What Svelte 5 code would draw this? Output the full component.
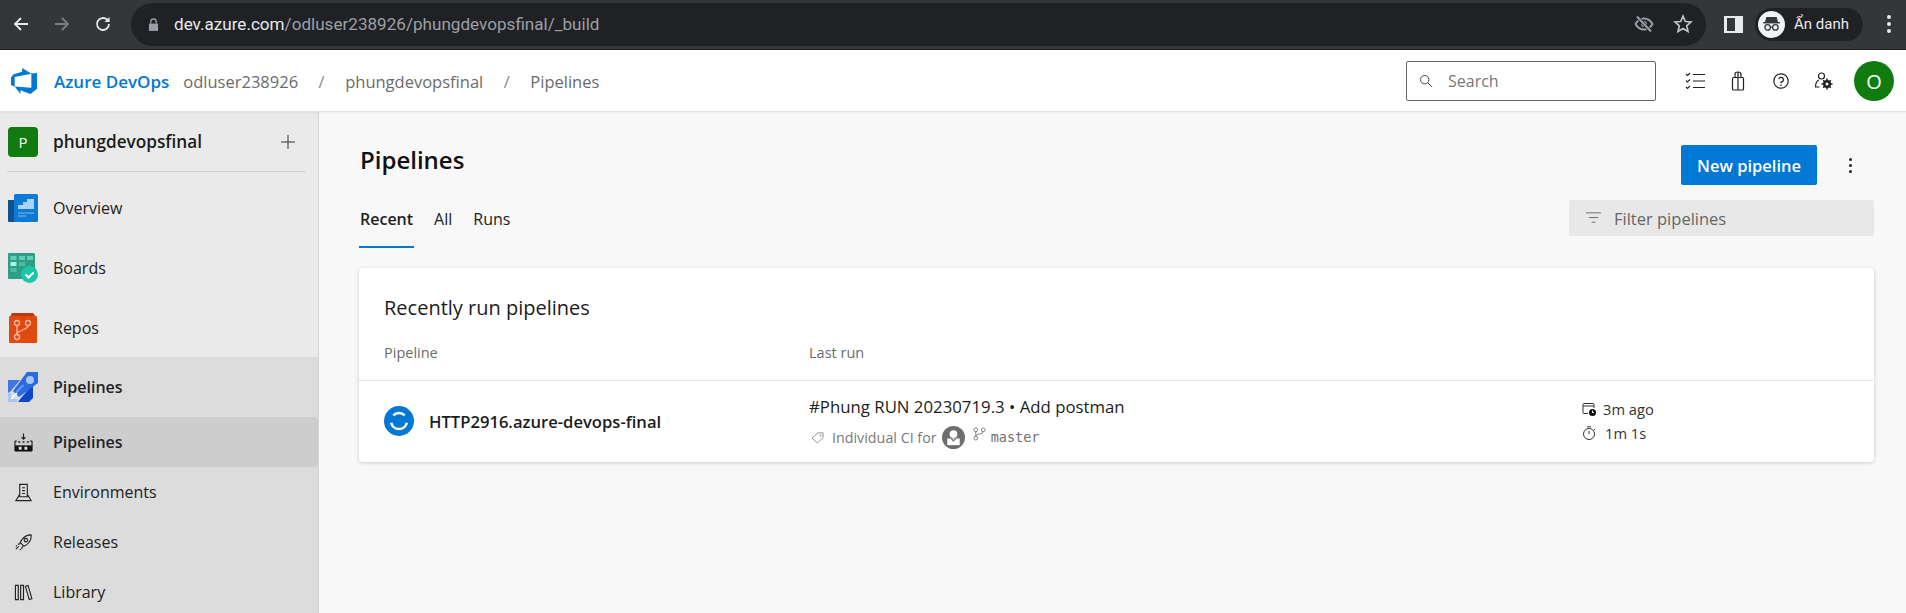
<script>
  const subNav = [
    { key: 'pipelines', label: 'Pipelines', selected: true },
    { key: 'environments', label: 'Environments' },
    { key: 'releases', label: 'Releases' },
    { key: 'library', label: 'Library' }
  ];
  const tabs = ['Recent', 'All', 'Runs'];
</script>

{#snippet subIcon(key)}
  <svg class="sub-icon" viewBox="0 0 20 20" fill="none" stroke="#222" stroke-width="1.2">
    {#if key === 'pipelines'}
      <path d="M10 0.5v6M8 4.500l2 2 2-2" />
      <path d="M1 8.500V19M19 8.500V19M1 8.500h2M17 8.500h2" />
      <path d="M4.500 9.500h2M9 9.500h2M13.500 9.500h2" stroke-width="1.600" />
      <path d="M1 13h18v6.500H1z" fill="#111" stroke="none" />
      <path d="M5 14.500h3v3H5zM11 14.500h3v3h-3z" fill="#ddd" stroke="none" />
    {:else if key === 'environments'}
      <path d="M6 1.500h8v13H6zM8.500 5h3M8.500 8h3M8.500 11h3" />
      <path d="M6 12L2 18.500h16L14 12" />
    {:else if key === 'releases'}
      <path d="M18 2c.4 4-1.500 8-5 10.500l-2.500 1.500-4-4 1.500-2.500C10.500 4 14 2 18 2z" />
      <circle cx="12.500" cy="7.500" r="1.800" />
      <path d="M7 11l-3 1M9 14l-1 3M5 14l-3 3M3 13l-1 1M7 17l-1 1" />
    {:else}
      <path d="M1.500 2.500h3v15h-3zM7 2.500h3v15H7zM12 3.500l2.800-1 4 14-2.800 1z" />
    {/if}
  </svg>
{/snippet}

<div class="page">
  <div class="chrome">
    <svg class="nav-btn first" viewBox="0 0 18 18" fill="none" stroke="#e8eaed" stroke-width="1.800"><path d="M16 9H3M9 3L3 9l6 6" /></svg>
    <svg class="nav-btn" viewBox="0 0 18 18" fill="none" stroke="#7d7e81" stroke-width="1.800"><path d="M2 9h13M9 3l6 6-6 6" /></svg>
    <svg class="nav-btn" viewBox="0 0 18 18" fill="none" stroke="#e8eaed" stroke-width="1.800"><path d="M15 9a6 6 0 1 1-1.800-4.300L15 6.500" /><path d="M15.500 2v5h-5" fill="#e8eaed" stroke="none" /></svg>
    <div class="omnibox">
      <svg class="lock" viewBox="0 0 12 14" fill="#9aa0a6"><path d="M1 6h10v8H1z" /><path d="M3 6V4a3 3 0 0 1 6 0v2" fill="none" stroke="#9aa0a6" stroke-width="1.400" /></svg>
      <span class="url"><span class="host">dev.azure.com</span>/odluser238926/phungdevopsfinal/_build</span>
      <span class="spacer"></span>
      <svg class="eye" viewBox="0 0 20 20" fill="none" stroke="#9aa0a6" stroke-width="2"><path d="M1.500 10C4 5.500 7 4.500 10 4.500s6 1 8.500 5.500C16 14.500 13 15.500 10 15.500S4 14.500 1.500 10z" /><circle cx="10" cy="10" r="2" fill="#9aa0a6" /><path d="M3 2.500l14 15" stroke="#202124" stroke-width="3.500" /><path d="M3 2.500l14 15" /></svg>
      <svg class="star" viewBox="0 0 20 20" fill="none" stroke="#bdc1c6" stroke-width="1.700"><path d="M10 2.200l2.300 5.300 5.700.5-4.300 3.800 1.300 5.600-5-3-5 3 1.300-5.600L2 8l5.700-.5z" /></svg>
    </div>
    <div class="panel-icon"><span></span></div>
    <div class="incognito">
      <span class="inc-avatar">
        <svg viewBox="0 0 20 20" fill="none" stroke="#35363a" stroke-width="1.200"><path d="M5.500 3.500h9l1 4h-11z" fill="#35363a" /><path d="M2 8.300h16" stroke-width="1.400" /><circle cx="6.300" cy="12.800" r="2.600" /><circle cx="13.700" cy="12.800" r="2.600" /><path d="M8.900 12.500h2.200" /></svg>
      </span>
      <span class="inc-label">Ẩn danh</span>
    </div>
    <div class="chrome-dots"><i></i><i></i><i></i></div>
  </div>

  <header class="topbar">
    <svg class="logo" viewBox="1 1 16 16" fill="#0078d4"><path d="M17 4v9.740l-4 3.280-6.200-2.260V17l-3.510-4.590 10.230.8V4.440zm-3.410.49L7.850 1v2.290L2.580 4.840 1 6.870v4.610l2.260 1V6.570z" /></svg>
    <span class="brand">Azure DevOps</span>
    <span class="crumb org">odluser238926</span>
    <span class="sep">/</span>
    <span class="crumb">phungdevopsfinal</span>
    <span class="sep">/</span>
    <span class="crumb">Pipelines</span>
    <span class="spacer"></span>
    <div class="search">
      <svg class="search-icon" viewBox="0 0 16 16" fill="none" stroke="#444" stroke-width="1.100"><circle cx="6.500" cy="6.500" r="4.800" /><path d="M10 10l5 5" /></svg>
      <span>Search</span>
    </div>
    <svg class="top-icon" viewBox="0 0 20 20" fill="none" stroke="#222" stroke-width="1.100"><path d="M8 3.500h12M8 10h12M8 16.500h12" /><path d="M1 3l1.500 1.500L5 2M1 9.500L2.500 11 5 8.500M1 16l1.500 1.500L5 15" /></svg>
    <svg class="top-icon" viewBox="0 0 20 20" fill="none" stroke="#222" stroke-width="1.200"><path d="M5.500 6.500h9a1 1 0 0 1 1 1V18a1 1 0 0 1-1 1h-9a1 1 0 0 1-1-1V7.500a1 1 0 0 1 1-1z" /><path d="M7 6.500V3a3 2 0 0 1 6 0v3.500M10 1.500V19" /></svg>
    <svg class="top-icon" viewBox="0 0 20 20" fill="none" stroke="#222" stroke-width="1.200"><circle cx="10" cy="10" r="7.200" /><path d="M7.800 8.200A2.300 2.300 0 1 1 10 11v1.200M10 13.600v1.400" /></svg>
    <svg class="top-icon gear" viewBox="0 0 20 20" fill="none" stroke="#222" stroke-width="1.200"><circle cx="7.500" cy="5" r="3" /><path d="M5 9C2.500 10 1.500 12 1.500 16h4" /><circle cx="13" cy="13" r="4" fill="#222" stroke="none" /><path d="M13 7.500v11M7.500 13h11M9.200 9.200l7.600 7.600M16.800 9.200l-7.600 7.600" stroke-width="1.500" /><circle cx="13" cy="13" r="1.500" fill="#fff" stroke="none" /></svg>
    <div class="avatar">O</div>
  </header>

  <div class="body">
    <aside class="sidebar">
      <div class="project">
        <span class="project-badge">P</span>
        <span class="project-name">phungdevopsfinal</span>
        <svg class="plus" viewBox="0 0 14 14" stroke="#333" stroke-width="1"><path d="M7 0v14M0 7h14" /></svg>
      </div>
      <div class="divider"></div>

      <div class="hubs">
        <div class="nav-item">
          <svg class="hub-icon" viewBox="0 0 30 28">
            <path d="M0 6h10v22H1a1 1 0 0 1-1-1z" fill="#10518f" />
            <rect x="6" width="24" height="28" rx="1.500" fill="#0f79d6" />
            <path d="M10 11h5V8h4V5h7v10H10z" fill="#a8d5f7" />
            <path d="M10 19h16M10 22h8" stroke="#7fbdf0" stroke-width="1" />
          </svg>
          <span>Overview</span>
        </div>
        <div class="nav-item">
          <svg class="hub-icon" viewBox="0 0 30 30">
            <rect width="27" height="26" rx="1" fill="#2f9e89" />
            <rect x="2.500" y="3" width="6" height="4" fill="#62cdb6" />
            <rect x="11" y="3" width="6" height="4" fill="#62cdb6" />
            <rect x="19" y="3" width="6" height="4" fill="#62cdb6" />
            <rect x="2.500" y="9" width="6" height="4" fill="#a6f4e2" />
            <rect x="11" y="9" width="6" height="4" fill="#4fbba3" />
            <rect x="2.500" y="15" width="6" height="4" fill="#4fbba3" />
            <circle cx="21.500" cy="21.500" r="8.500" fill="#1cc7a8" />
            <path d="M17.500 21.500l3 3 5-5" stroke="#fff" stroke-width="2" fill="none" />
          </svg>
          <span>Boards</span>
        </div>
        <div class="nav-item">
          <svg class="hub-icon" viewBox="0 0 30 30">
            <path d="M4 0h21l3 4H2z" fill="#b83b0b" />
            <rect x="1" y="3" width="28" height="27" rx="1" fill="#de4a0f" />
            <g fill="none" stroke="#f7b9a0" stroke-width="1.300">
              <circle cx="9" cy="10" r="2.500" /><circle cx="20" cy="10" r="2.500" /><circle cx="9" cy="24" r="2.500" />
              <path d="M9 12.500v9M20 12.500c0 5-11 4-11 9" />
            </g>
          </svg>
          <span>Repos</span>
        </div>
      </div>

      <div class="pipelines-group">
        <div class="nav-item group-head">
          <svg class="hub-icon" viewBox="0 0 30 30">
            <path d="M0 8h12L3 19l-3 2z" fill="#3f78e0" />
            <path d="M25 12v14l-4 4H10l3-4z" fill="#1147c4" />
            <path d="M19 0h11v11L11 25l-6-6z" fill="#2b6be0" />
            <circle cx="22" cy="8" r="4" fill="#a9c6f7" />
            <path d="M8.500 20l7-7" stroke="#6b9cf0" stroke-width="2" />
            <path d="M1.500 21v7.500H9" fill="none" stroke="#a8c5f8" stroke-width="3" />
            <path d="M3 27l6-6" stroke="#eef3fd" stroke-width="2" />
          </svg>
          <span>Pipelines</span>
        </div>
        {#each subNav as item}
          <div class="sub-item" class:selected={item.selected}>
            {@render subIcon(item.key)}
            <span>{item.label}</span>
          </div>
        {/each}
      </div>
    </aside>

    <main class="content">
      <div class="title-row">
        <h1>Pipelines</h1>
        <span class="spacer"></span>
        <button class="primary">New pipeline</button>
        <div class="more"><i></i><i></i><i></i></div>
      </div>

      <div class="tab-row">
        <div class="tabs">
          {#each tabs as tab, i}
            <span class="tab" class:active={i === 0}>{tab}</span>
          {/each}
        </div>
        <div class="filter">
          <svg viewBox="0 0 16 12" stroke="#666" stroke-width="1"><path d="M0 .5h16M3 5.500h10M6 10.500h4" /></svg>
          <span>Filter pipelines</span>
        </div>
      </div>

      <section class="card">
        <h2>Recently run pipelines</h2>
        <div class="cols">
          <span class="col-pipeline">Pipeline</span>
          <span>Last run</span>
        </div>
        <div class="row">
          <div class="col-pipeline name-cell">
            <svg class="status" viewBox="0 0 30 30">
              <circle cx="15" cy="15" r="15" fill="#0078d4" />
              <path d="M9.300 9.400a8 8 0 0 1 11.400 0M22.800 16.800a8 8 0 0 1-15.600 0" fill="none" stroke="#fff" stroke-width="2.600" />
            </svg>
            <span class="name">HTTP2916.azure-devops-final</span>
          </div>
          <div class="run-cell">
            <div class="run-title">#Phung RUN 20230719.3 • Add postman</div>
            <div class="run-meta">
              <svg class="tag" viewBox="0 0 14 14" fill="none" stroke="#8a8a8a" stroke-width="1"><path d="M1 7.500L7.500 2H13v5l-6 6z" /><circle cx="10.300" cy="4.700" r=".6" /></svg>
              <span class="trigger">Individual CI for</span>
              <svg class="user" viewBox="0 0 24 24">
                <circle cx="12" cy="12" r="12" fill="#6e6e6e" />
                <circle cx="12" cy="8.500" r="4" fill="#fff" />
                <path d="M5.500 13h13v7h-13z" fill="#fff" />
                <path d="M9.500 13l2.500 2.500 2.500-2.500" fill="none" stroke="#6e6e6e" stroke-width="1.200" />
              </svg>
              <svg class="branch" viewBox="0 0 14 14" fill="none" stroke="#777" stroke-width="1"><circle cx="3" cy="2.500" r="2" /><circle cx="11" cy="2.500" r="2" /><circle cx="3" cy="11.500" r="2" /><path d="M3 4.500v5M11 4.500c0 3-8 2-8 5" /></svg>
              <span class="ref">master</span>
            </div>
          </div>
          <div class="time-cell">
            <div class="time-line">
              <svg viewBox="0 0 14 14" fill="none" stroke="#333" stroke-width="1"><path d="M6 11.500H2a1 1 0 0 1-1-1v-8a1 1 0 0 1 1-1h9a1 1 0 0 1 1 1V6M1 4h11" /><circle cx="10.500" cy="10.500" r="3.500" fill="#111" stroke="none" /><path d="M10.500 8.500v2h1.500" stroke="#fff" /></svg>
              <span>3m ago</span>
            </div>
            <div class="time-line">
              <svg viewBox="0 0 14 14" fill="none" stroke="#333" stroke-width="1"><circle cx="7" cy="8" r="5.500" /><path d="M5 .8h4M7 5v3M12 3l1 1" /></svg>
              <span class="dur">1m 1s</span>
            </div>
          </div>
        </div>
      </section>
    </main>
  </div>
</div>

<style>
  :global(body) {
    margin: 0;
    overflow: hidden;
  }

  .page {
    height: 613px;
    display: flex;
    flex-direction: column;
    font-family: "Open Sans", "Noto Sans", sans-serif;
    font-size: 15px;
    color: #222;
    background: #f8f8f8;
    overflow: hidden;
  }

  .spacer {
    flex: 1;
  }

  /* browser chrome */
  .chrome {
    height: 50px;
    flex: none;
    display: flex;
    align-items: center;
    background: #35363a;
    box-sizing: border-box;
    padding-bottom: 1px;
    border-bottom: 1px solid #202124;
  }

  .nav-btn {
    width: 18px;
    height: 18px;
    margin-left: 23px;
  }

  .nav-btn.first {
    margin-left: 12px;
  }

  .omnibox {
    width: 1575px;
    height: 43px;
    margin-left: 19px;
    display: flex;
    align-items: center;
    background: #202124;
    border-radius: 22px;
  }

  .lock {
    width: 11px;
    height: 13px;
    margin-left: 17px;
  }

  .url {
    margin-left: 15px;
    font-family: Roboto, sans-serif;
    font-size: 17.100px;
    color: #9aa0a6;
  }

  .host {
    color: #e8eaed;
  }

  .eye {
    width: 20px;
    height: 20px;
  }

  .star {
    width: 20px;
    height: 20px;
    margin: 0 13px 0 19px;
  }

  .panel-icon {
    width: 19px;
    height: 17px;
    margin-left: 18px;
    box-sizing: border-box;
    border: 2px solid #e8eaed;
    border-left-width: 3px;
    display: flex;
    justify-content: flex-end;
  }

  .panel-icon span {
    width: 6px;
    background: #e8eaed;
  }

  .incognito {
    width: 108px;
    height: 33px;
    margin-left: 12px;
    display: flex;
    align-items: center;
    background: #202124;
    border-radius: 17px;
    box-sizing: border-box;
    padding-left: 3px;
  }

  .inc-avatar {
    width: 27px;
    height: 27px;
    border-radius: 50%;
    background: #f1f3f4;
    display: flex;
    align-items: center;
    justify-content: center;
  }

  .inc-avatar svg {
    width: 21px;
    height: 21px;
  }

  .inc-label {
    margin-left: 9px;
    font-family: Roboto, sans-serif;
    font-size: 15px;
    color: #e8eaed;
  }

  .chrome-dots {
    margin-left: 24px;
    display: flex;
    flex-direction: column;
    gap: 3px;
  }

  .chrome-dots i {
    width: 4px;
    height: 4px;
    border-radius: 50%;
    background: #e8eaed;
  }

  /* azure header */
  .topbar {
    height: 62px;
    flex: none;
    box-sizing: border-box;
    display: flex;
    align-items: center;
    background: #fff;
    border-bottom: 1px solid #e3e3e3;
    box-shadow: 0 1px 2px rgba(0, 0, 0, 0.06);
    position: relative;
    padding: 1px 12px 0 0;
  }

  .logo {
    width: 26px;
    height: 26px;
    margin-left: 11px;
  }

  .brand {
    margin-left: 17px;
    font-weight: 600;
    font-size: 17px;
    color: #0078d4;
  }

  .crumb {
    color: #6b6b6b;
    font-size: 16.500px;
  }

  .crumb.org {
    margin-left: 14px;
  }

  .sep {
    color: #8a8a8a;
    font-size: 16.500px;
    margin: 0 20.500px;
  }

  .search {
    width: 250px;
    height: 40px;
    box-sizing: border-box;
    border: 1px solid #666;
    border-radius: 2px;
    display: flex;
    align-items: center;
    padding-left: 12px;
    margin-right: 29px;
    color: #777;
    font-size: 16px;
  }

  .search-icon {
    width: 14px;
    height: 14px;
    margin-right: 15px;
  }

  .top-icon {
    width: 20px;
    height: 20px;
    margin-right: 23px;
  }

  .top-icon.gear {
    margin-right: 20px;
  }

  .avatar {
    width: 40px;
    height: 40px;
    border-radius: 50%;
    background: #107c10;
    color: #fff;
    font-size: 20px;
    display: flex;
    align-items: center;
    justify-content: center;
  }

  .body {
    flex: 1;
    display: flex;
    min-height: 0;
  }

  /* sidebar */
  .sidebar {
    width: 319px;
    flex: none;
    box-sizing: border-box;
    background: #eaeaea;
    border-right: 1px solid #d4d4d4;
    display: flex;
    flex-direction: column;
  }

  .project {
    height: 59px;
    flex: none;
    display: flex;
    align-items: center;
    padding-left: 8px;
  }

  .project-badge {
    width: 30px;
    height: 30px;
    border-radius: 4px;
    background: #107c10;
    color: #fff;
    font-size: 15px;
    display: flex;
    align-items: center;
    justify-content: center;
  }

  .project-name {
    margin-left: 15px;
    font-weight: 600;
    font-size: 17.200px;
    color: #1c1c1c;
    flex: 1;
  }

  .plus {
    width: 14px;
    height: 14px;
    margin-right: 23px;
  }

  .divider {
    height: 1px;
    flex: none;
    background: #d0d0d0;
    margin: 0 12px 0 7px;
  }

  .hubs {
    padding-top: 6px;
  }

  .nav-item {
    height: 60px;
    flex: none;
    display: flex;
    align-items: center;
    padding-left: 8px;
    font-size: 16px;
  }

  .hub-icon {
    width: 30px;
    height: 30px;
    margin-right: 15px;
  }

  .pipelines-group {
    background: #dcdcdc;
    flex: 1;
    margin-top: -1px;
  }

  .group-head {
    font-weight: 600;
    height: 60px;
  }

  .sub-item {
    height: 50px;
    display: flex;
    align-items: center;
    font-size: 16px;
    padding-left: 14px;
    border-radius: 0 4px 4px 0;
  }

  .sub-item.selected {
    background: #cdcdcd;
    font-weight: 600;
  }

  .sub-icon {
    width: 19px;
    height: 19px;
    margin-right: 20px;
  }

  /* page content */
  .content {
    flex: 1;
    min-width: 0;
    box-sizing: border-box;
    padding: 33px 32px 0 40px;
  }

  .title-row {
    height: 40px;
    display: flex;
    align-items: center;
    padding-left: 1px;
  }

  h1 {
    margin: 0 0 12px;
    font-size: 24px;
    font-weight: 600;
    color: #111;
  }

  .primary {
    width: 136px;
    height: 40px;
    border: none;
    border-radius: 2px;
    background: #0078d4;
    color: #fff;
    font-family: inherit;
    font-size: 16.500px;
    font-weight: 600;
  }

  .more {
    width: 57px;
    box-sizing: border-box;
    padding-left: 9px;
    display: flex;
    flex-direction: column;
    align-items: center;
    gap: 3px;
  }

  .more i {
    width: 3px;
    height: 3px;
    border-radius: 50%;
    background: #222;
  }

  .tab-row {
    display: flex;
    justify-content: space-between;
    margin-top: 15px;
  }

  .tabs {
    display: flex;
    gap: 19px;
    height: 48px;
  }

  .tab {
    height: 48px;
    display: flex;
    align-items: center;
    padding: 0 1px 8px;
    box-sizing: border-box;
    font-size: 16px;
    border-bottom: 2px solid transparent;
  }

  .tab.active {
    font-weight: 600;
    border-bottom-color: #0078d4;
  }

  .filter {
    width: 305px;
    height: 36px;
    box-sizing: border-box;
    background: #e8e8e8;
    border-radius: 2px;
    display: flex;
    align-items: center;
    padding-left: 17px;
    color: #666;
    font-size: 16.500px;
  }

  .filter svg {
    width: 15px;
    height: 12px;
    margin-right: 13px;
  }

  .card {
    margin-top: 20px;
    height: 194px;
    background: #fff;
    border-radius: 4px;
    box-shadow: 0 1px 4px rgba(0, 0, 0, 0.18);
  }

  h2 {
    margin: 0;
    padding: 24px 0 0 25px;
    height: 32px;
    line-height: 32px;
    font-size: 20px;
    font-weight: 400;
    color: #1c1c1c;
  }

  .cols {
    height: 57px;
    display: flex;
    align-items: center;
    padding-left: 25px;
    box-sizing: border-box;
    border-bottom: 1px solid #e8e8e8;
    color: #6b6b6b;
    font-size: 14.500px;
  }

  .col-pipeline {
    width: 425px;
    flex: none;
  }

  .row {
    height: 80px;
    display: flex;
    align-items: center;
    padding-left: 25px;
  }

  .name-cell {
    display: flex;
    align-items: center;
  }

  .status {
    width: 30px;
    height: 30px;
    margin-right: 15px;
  }

  .name {
    font-size: 16.600px;
    font-weight: 600;
    color: #1c1c1c;
  }

  .run-cell {
    width: 773px;
    flex: none;
  }

  .run-title {
    font-size: 16.800px;
    color: #1c1c1c;
    height: 27px;
    line-height: 27px;
  }

  .run-meta {
    display: flex;
    align-items: center;
    height: 24px;
    margin-top: 5px;
    color: #7a7a7a;
    font-size: 14.300px;
  }

  .tag {
    width: 13px;
    height: 13px;
    margin: 0 8px 0 2px;
  }

  .user {
    width: 23px;
    height: 23px;
    margin: 0 8px 0 5px;
  }

  .branch {
    width: 13px;
    height: 14px;
    margin: -6px 5px 0 0;
  }

  .ref {
    font-family: "DejaVu Sans Mono", "Liberation Mono", monospace;
    font-size: 13.500px;
    color: #6f6f6f;
  }

  .time-line {
    display: flex;
    align-items: center;
    height: 24px;
    font-size: 14.700px;
    color: #333;
  }

  .time-line svg {
    width: 14px;
    height: 14px;
    margin-right: 7px;
  }

  .dur {
    margin-left: 2px;
  }
</style>
